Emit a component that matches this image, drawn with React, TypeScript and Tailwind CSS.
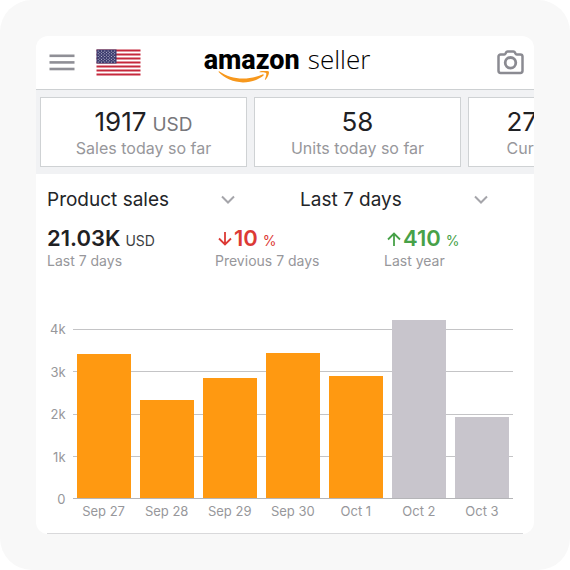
import type { ReactNode } from "react";

type Day = {
  label: string;
  sales: number;
  estimated?: boolean;
};

const MAX_SALES = 4000;

const days: Day[] = [
  { label: "Sep 27", sales: 3400 },
  { label: "Sep 28", sales: 2310 },
  { label: "Sep 29", sales: 2850 },
  { label: "Sep 30", sales: 3440 },
  { label: "Oct 1", sales: 2880 },
  { label: "Oct 2", sales: 4220, estimated: true },
  { label: "Oct 3", sales: 1910, estimated: true },
];

const ticks = ["4k", "3k", "2k", "1k", "0"];

const MenuIcon = () => (
  <svg width="26" height="18" viewBox="0 0 26 18" fill="#8f8f96" aria-hidden="true">
    <rect x="0.5" y="0.5" width="25" height="2.6" />
    <rect x="0.5" y="7.1" width="25" height="2.6" />
    <rect x="0.5" y="13.7" width="25" height="2.6" />
  </svg>
);

const UsFlag = () => (
  <svg width="45" height="27" viewBox="0 0 45 27" role="img" aria-label="United States">
    <rect x="0.5" y="0.5" width="44" height="26" fill="#fff" />
    {[0, 1, 2, 3, 4, 5, 6].map((i) => (
      <rect key={i} x="0.5" y={0.5 + i * 4} width="44" height="2" fill="#c5283c" />
    ))}
    <rect x="0.5" y="0.5" width="20" height="14" fill="#3c3b6e" />
    {[0, 1, 2, 3, 4, 5, 6, 7, 8].map((row) =>
      [0, 1, 2, 3, 4, 5].slice(row % 2).map((col) => (
        <circle
          key={`${row}-${col}`}
          cx={2.2 + col * 3.3 - (row % 2) * 1.65}
          cy={1.9 + row * 1.4}
          r="0.5"
          fill="#e4e4f0"
        />
      ))
    )}
  </svg>
);

const CameraIcon = () => (
  <svg
    width="28"
    height="26"
    viewBox="0 0 28 26"
    fill="none"
    stroke="#8b8b92"
    strokeWidth="2.5"
    strokeLinejoin="round"
    aria-hidden="true"
  >
    <path d="M3.7 4.5H7.2C8.3 4.5 8.4 3.9 8.9 2.8C9.3 1.9 9.8 1.6 10.6 1.6H16.4C17.2 1.6 17.7 1.9 18.1 2.8C18.6 3.9 18.7 4.5 19.8 4.5H23.3C24.7 4.5 25.5 5.3 25.5 6.6V20.8C25.5 22.1 24.7 22.9 23.3 22.9H3.7C2.3 22.9 1.5 22.1 1.5 20.8V6.6C1.5 5.3 2.3 4.5 3.7 4.5Z" />
    <circle cx="13.5" cy="12.8" r="5.3" strokeWidth="2.8" />
  </svg>
);

const Smile = () => (
  <svg width="52" height="12" viewBox="0 0 52 12" fill="#f7981d" aria-hidden="true">
    <path d="M0.6 1.1C0.3 0.6 0.9 0.1 1.5 0.5C8 4.8 16 7.6 25 7.6C32 7.6 39 6 44.5 3.5C45.6 3 46.2 4 45.3 4.7C40 9 32.5 11.4 25 11.4C15.5 11.4 6.5 7.5 0.6 1.1Z" />
    <path d="M42.1 1.3C41.3 1.4 41.3 0.9 41.9 0.5C44.5 -0.5 49.5 -0.5 50.8 0.6C51.5 2 49.9 6.5 47.7 8.6C47.2 9.1 46.7 8.9 46.9 8.3C47.7 6.3 48.7 3.2 48.2 2.2C47.5 1.2 44.2 1.1 42.1 1.3Z" />
  </svg>
);

const Chevron = () => (
  <svg
    className="pointer-events-none col-start-1 row-start-1 self-center justify-self-end"
    width="14"
    height="10"
    viewBox="0 0 14 10"
    fill="none"
    stroke="#a5a5aa"
    strokeWidth="2"
    aria-hidden="true"
  >
    <path d="M1 1.5L7 7.5L13 1.5" />
  </svg>
);

const Arrow = ({ up = false }: { up?: boolean }) => (
  <svg
    width="14"
    height="14"
    viewBox="0 0 14 14"
    fill="none"
    stroke="currentColor"
    strokeWidth="1.8"
    aria-hidden="true"
  >
    <path d={up ? "M7 14V1.5M1 7.5L7 1.5L13 7.5" : "M7 0V12.5M1 6.5L7 12.5L13 6.5"} />
  </svg>
);

const Logo = () => (
  <div className="flex flex-col">
    <div className="flex h-8 items-baseline gap-2 leading-8 text-black">
      <span className="font-[Roboto,sans-serif] text-[27px] font-extrabold">amazon</span>
      <span className="font-['Open_Sans',sans-serif] text-[26px] font-light">seller</span>
    </div>
    <div className="-mt-1 pl-[14px]">
      <Smile />
    </div>
  </div>
);

const StatCard = ({ value, unit, label }: { value: string; unit?: string; label: string }) => (
  <li className="flex h-[70px] w-[207px] shrink-0 flex-col items-center border border-[#cfd2d4] bg-white pt-2">
    <p className="flex h-8 items-baseline gap-[6px] text-[26px] leading-8 text-[#1f2124]">
      {value}
      {unit && <span className="text-[19px] text-[#77777b]">{unit}</span>}
    </p>
    <p className="text-base leading-5 text-[#97979b]">{label}</p>
  </li>
);

const Picker = ({ label, options }: { label: string; options: string[] }) => (
  <div className="grid w-[188px]">
    <select
      aria-label={label}
      className="col-start-1 row-start-1 appearance-none bg-transparent text-[19px] leading-7 text-[#232528]"
    >
      {options.map((option) => (
        <option key={option}>{option}</option>
      ))}
    </select>
    <Chevron />
  </div>
);

type MetricProps = {
  value: string;
  unit: string;
  label: string;
  className: string;
  unitClassName: string;
  icon?: ReactNode;
};

const Metric = ({ value, unit, label, className, unitClassName, icon }: MetricProps) => (
  <div className="flex flex-col">
    <dt className="order-2 text-sm leading-5 text-[#97979b]">{label}</dt>
    <dd className={`flex items-baseline ${className}`}>
      {icon && <span className="mr-[2px] ml-[3px]">{icon}</span>}
      <span className="text-[22px] leading-6 font-semibold">{value}</span>
      <span className={`ml-[5px] text-sm ${unitClassName}`}>{unit}</span>
    </dd>
  </div>
);

const SalesChart = () => (
  <figure
    aria-label="Product sales by day"
    className="mt-[58px] grid grid-cols-[auto_1fr] gap-x-[7px] pr-[21px] pl-[14px] text-[13px] leading-4 text-[#97979b]"
  >
    <div className="-my-2 flex h-[186px] flex-col justify-between text-right">
      {ticks.map((tick) => (
        <span key={tick}>{tick}</span>
      ))}
    </div>
    <div className="grid h-[170px]">
      <div className="col-start-1 row-start-1 flex flex-col justify-between">
        {ticks.map((tick) => (
          <div key={tick} className="h-px bg-[#c4c4c6]" />
        ))}
      </div>
      <div className="col-start-1 row-start-1 grid grid-cols-7 items-end gap-x-[9px] border-b border-[#b5b5b8] px-1">
        {days.map((day) => (
          <div
            key={day.label}
            className={day.estimated ? "bg-[#c8c5cc]" : "bg-[#ff9911]"}
            style={{ height: `${(day.sales / MAX_SALES) * 100}%` }}
          />
        ))}
      </div>
    </div>
    <div className="col-start-2 grid grid-cols-7 gap-x-[9px] px-1 pt-1 text-center whitespace-nowrap">
      {days.map((day) => (
        <span key={day.label}>{day.label}</span>
      ))}
    </div>
  </figure>
);

export default function App() {
  return (
    <div className="min-h-screen rounded-[32px] bg-[#f8f8f8] p-9 font-[Inter,sans-serif]">
      <main className="overflow-hidden rounded-xl bg-white">
        <header className="grid h-[54px] grid-cols-[1fr_auto_1fr] items-center border-b border-[#cdd0d2] pr-[9px] pl-[13px]">
          <div className="flex items-center gap-[21px]">
            <button type="button" aria-label="Menu">
              <MenuIcon />
            </button>
            <UsFlag />
          </div>
          <Logo />
          <button type="button" aria-label="Scan with camera" className="justify-self-end">
            <CameraIcon />
          </button>
        </header>

        <ul className="flex gap-[7px] overflow-hidden bg-[#f1f2f4] px-1 py-[7px]">
          <StatCard value="1917" unit="USD" label="Sales today so far" />
          <StatCard value="58" label="Units today so far" />
          <StatCard value="27.03K" unit="USD" label="Current balances" />
        </ul>

        <section>
          <div className="flex gap-[65px] px-[11px] pt-3">
            <Picker label="Metric" options={["Product sales", "Units ordered"]} />
            <Picker label="Period" options={["Last 7 days", "Last 30 days"]} />
          </div>
          <dl className="mt-3 grid grid-cols-[168px_169px_1fr] pl-[11px]">
            <Metric
              value="21.03K"
              unit="USD"
              label="Last 7 days"
              className="text-[#1f2124]"
              unitClassName="text-[#3c3e42]"
            />
            <Metric
              value="10"
              unit="%"
              label="Previous 7 days"
              className="text-[#dc3a35]"
              unitClassName="text-[#dc3a35]"
              icon={<Arrow />}
            />
            <Metric
              value="410"
              unit="%"
              label="Last year"
              className="text-[#47a148]"
              unitClassName="text-[#47a148]"
              icon={<Arrow up />}
            />
          </dl>
          <SalesChart />
          <hr className="mx-[11px] mt-[14px] border-[#d9d9db]" />
        </section>
      </main>
    </div>
  );
}
